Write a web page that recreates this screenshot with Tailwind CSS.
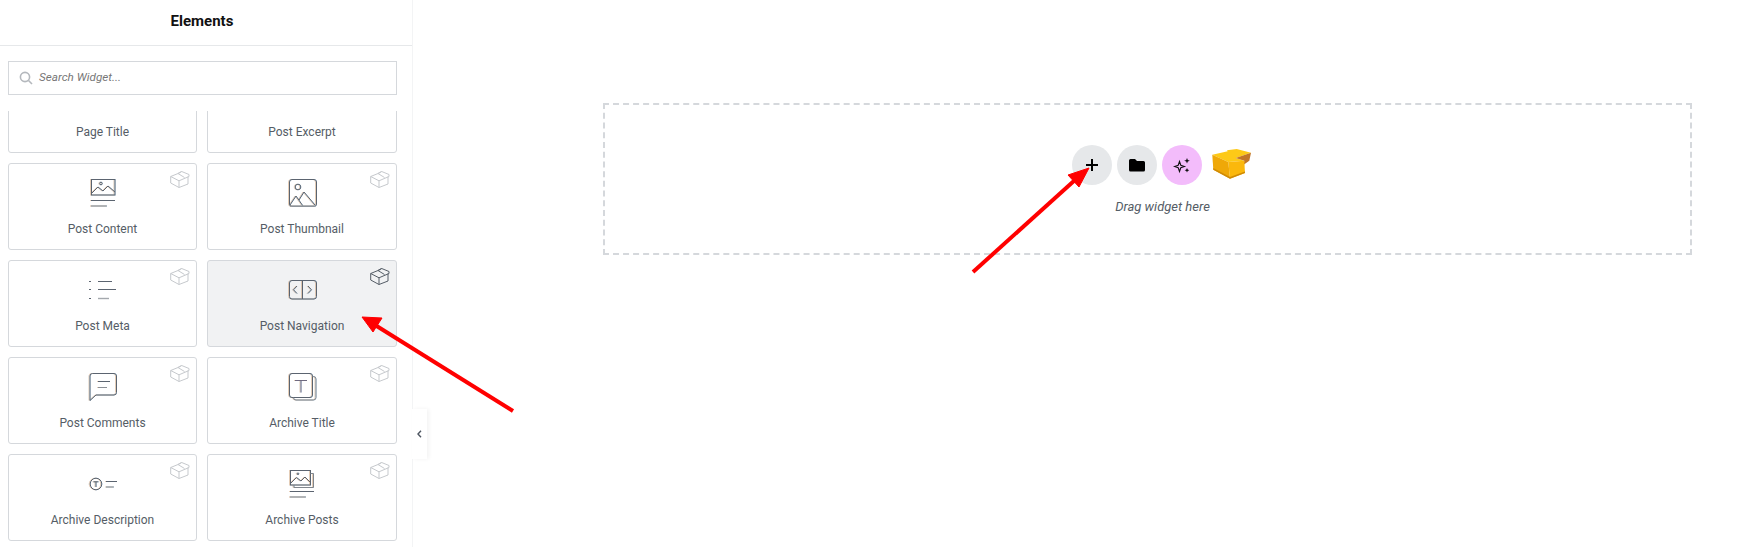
<!DOCTYPE html>
<html lang="en">
<head>
<meta charset="utf-8">
<title>Elements</title>
<script src="https://cdn.jsdelivr.net/npm/@tailwindcss/browser@4"></script>
</head>
<body class="bg-white overflow-hidden">
<div class="relative flex w-[1750px] h-[547px] overflow-hidden font-['Roboto',sans-serif] text-[#555d66]">

  <aside class="relative flex flex-col w-[413px] h-full shrink-0 bg-white border-r border-[#f3f4f5]">
    <header class="h-[46px] shrink-0 flex items-center justify-center border-b border-[#e6e8ea] pb-[2px] pr-[8px] text-[15px] font-bold text-[#111]">Elements</header>
    <div class="px-[8px] pt-[15px] pb-[16px] shrink-0">
      <div class="flex items-center h-[34px] w-[389px] border border-[#d5d8dc] pl-[10px] gap-[6px]">
        <svg class="w-[14px] h-[14px]" viewBox="0 0 14 14" fill="none" stroke="#b4b8bd" stroke-width="1.6"><circle cx="6" cy="6" r="4.6"/><path d="M9.5 9.5 13 13"/></svg>
        <span class="italic text-[11.700px] text-[#777]">Search Widget...</span>
      </div>
    </div>
    <div class="flex-1 overflow-hidden px-[8px]">
      <div class="grid grid-cols-[189px_190px] gap-x-[10px] gap-y-[10px] mt-[-45px]">

        <div class="relative h-[87px] rounded-[3px] border border-[#d5d8dc] flex flex-col items-center pt-[15px]">
          <div class="h-[30px]"></div><span class="mt-[12px] text-[12px] leading-[16px]">Page Title</span>
        </div>
        <div class="relative h-[87px] rounded-[3px] border border-[#d5d8dc] flex flex-col items-center pt-[15px]">
          <div class="h-[30px]"></div><span class="mt-[12px] text-[12px] leading-[16px]">Post Excerpt</span>
        </div>

        <div class="relative h-[87px] rounded-[3px] border border-[#d5d8dc] flex flex-col items-center pt-[15px]">
          <svg class="absolute top-[7px] right-[5px] w-[22px] h-[17px]" viewBox="0 0 22 17" fill="none" stroke="#c6c9cd" stroke-width="1"><path d="M1.700 5.500 10 9.800 20 5.500 M1.700 5.500V12L10 16.500 19 13V5.500 M10 9.800V16.500 M1.700 5.500 9 2.500 12.700 0.500 20 3.500V5.500 M9 2.500 15.500 6.500 M12.700 0.500 9 2.500"/></svg>
          <svg class="w-[30px] h-[30px] [filter:drop-shadow(-0.5px_0_0_rgba(230,150,80,0.4))_drop-shadow(0.5px_0_0_rgba(80,170,240,0.4))]" viewBox="0 0 30 30" fill="none" stroke="#5b6470"><rect x="3.500" y="0.500" width="23.500" height="15.500"/><path d="M4 14 10 8 15 12 20 7 27 13"/><circle cx="13" cy="4.500" r="1.300"/><path d="M3 21.500H27"/><path d="M3 27H19" stroke="#a4a8ad" stroke-width="1.400"/></svg>
          <span class="mt-[12px] text-[12px] leading-[16px]">Post Content</span>
        </div>
        <div class="relative h-[87px] rounded-[3px] border border-[#d5d8dc] flex flex-col items-center pt-[15px]">
          <svg class="absolute top-[7px] right-[5px] w-[22px] h-[17px]" viewBox="0 0 22 17" fill="none" stroke="#c6c9cd" stroke-width="1"><path d="M1.700 5.500 10 9.800 20 5.500 M1.700 5.500V12L10 16.500 19 13V5.500 M10 9.800V16.500 M1.700 5.500 9 2.500 12.700 0.500 20 3.500V5.500 M9 2.500 15.500 6.500 M12.700 0.500 9 2.500"/></svg>
          <svg class="w-[30px] h-[30px] [filter:drop-shadow(-0.5px_0_0_rgba(230,150,80,0.4))_drop-shadow(0.5px_0_0_rgba(80,170,240,0.4))]" viewBox="0 0 30 30" fill="none" stroke="#5b6470"><rect x="2.500" y="0.500" width="27" height="27" rx="2.500"/><circle cx="11" cy="8" r="2.800"/><path d="M3 26 9 17 16 27 M12 21 17 13 28 26"/><path d="M4 27H28" stroke="#a4a8ad" stroke-width="1.400"/></svg>
          <span class="mt-[12px] text-[12px] leading-[16px]">Post Thumbnail</span>
        </div>

        <div class="relative h-[87px] rounded-[3px] border border-[#d5d8dc] flex flex-col items-center pt-[15px]">
          <svg class="absolute top-[7px] right-[5px] w-[22px] h-[17px]" viewBox="0 0 22 17" fill="none" stroke="#c6c9cd" stroke-width="1"><path d="M1.700 5.500 10 9.800 20 5.500 M1.700 5.500V12L10 16.500 19 13V5.500 M10 9.800V16.500 M1.700 5.500 9 2.500 12.700 0.500 20 3.500V5.500 M9 2.500 15.500 6.500 M12.700 0.500 9 2.500"/></svg>
          <svg class="w-[30px] h-[30px]" viewBox="0 0 30 30" fill="none" stroke="#5b6470"><path d="M1 5.500H3 M1 13.500H3 M1 22.500H3 M10 5.500H24 M10 13.500H28"/><path d="M10 22.500H21" stroke="#a4a8ad" stroke-width="1.400"/></svg>
          <span class="mt-[12px] text-[12px] leading-[16px]">Post Meta</span>
        </div>
        <div class="relative h-[87px] rounded-[3px] border border-[#d5d8dc] bg-[#f1f2f3] flex flex-col items-center pt-[15px]">
          <svg class="absolute top-[7px] right-[5px] w-[22px] h-[17px]" viewBox="0 0 22 17" fill="none" stroke="#555d66" stroke-width="1"><path d="M1.700 5.500 10 9.800 20 5.500 M1.700 5.500V12L10 16.500 19 13V5.500 M10 9.800V16.500 M1.700 5.500 9 2.500 12.700 0.500 20 3.500V5.500 M9 2.500 15.500 6.500 M12.700 0.500 9 2.500"/></svg>
          <svg class="w-[30px] h-[30px] [filter:drop-shadow(-0.5px_0_0_rgba(230,150,80,0.4))_drop-shadow(0.5px_0_0_rgba(80,170,240,0.4))]" viewBox="0 0 30 30" fill="none" stroke="#5b6470"><rect x="2.500" y="4.500" width="27" height="18.500" rx="2.500"/><path d="M15.500 4.500V23 M10 10 6.500 13.800 10 17.500 M21 10 24.500 13.800 21 17.500"/></svg>
          <span class="mt-[12px] text-[12px] leading-[16px]">Post Navigation</span>
        </div>

        <div class="relative h-[87px] rounded-[3px] border border-[#d5d8dc] flex flex-col items-center pt-[15px]">
          <svg class="absolute top-[7px] right-[5px] w-[22px] h-[17px]" viewBox="0 0 22 17" fill="none" stroke="#c6c9cd" stroke-width="1"><path d="M1.700 5.500 10 9.800 20 5.500 M1.700 5.500V12L10 16.500 19 13V5.500 M10 9.800V16.500 M1.700 5.500 9 2.500 12.700 0.500 20 3.500V5.500 M9 2.500 15.500 6.500 M12.700 0.500 9 2.500"/></svg>
          <svg class="w-[30px] h-[30px] [filter:drop-shadow(-0.5px_0_0_rgba(230,150,80,0.4))_drop-shadow(0.5px_0_0_rgba(80,170,240,0.4))]" viewBox="0 0 30 30" fill="none" stroke="#5b6470"><path d="M4.500 0.500H26A2.500 2.500 0 0 1 28.500 3V19.500A2.500 2.500 0 0 1 26 22H8L2 27.500V3A2.500 2.500 0 0 1 4.500 0.500Z"/><path d="M10 8.500H22"/><path d="M10 14.500H19" stroke="#8a8f95"/></svg>
          <span class="mt-[12px] text-[12px] leading-[16px]">Post Comments</span>
        </div>
        <div class="relative h-[87px] rounded-[3px] border border-[#d5d8dc] flex flex-col items-center pt-[15px]">
          <svg class="absolute top-[7px] right-[5px] w-[22px] h-[17px]" viewBox="0 0 22 17" fill="none" stroke="#c6c9cd" stroke-width="1"><path d="M1.700 5.500 10 9.800 20 5.500 M1.700 5.500V12L10 16.500 19 13V5.500 M10 9.800V16.500 M1.700 5.500 9 2.500 12.700 0.500 20 3.500V5.500 M9 2.500 15.500 6.500 M12.700 0.500 9 2.500"/></svg>
          <svg class="w-[30px] h-[30px] [filter:drop-shadow(-0.5px_0_0_rgba(230,150,80,0.4))_drop-shadow(0.5px_0_0_rgba(80,170,240,0.4))]" viewBox="0 0 30 30" fill="none" stroke="#5b6470"><rect x="2.500" y="0.500" width="23" height="24" rx="2.500"/><path d="M25.500 3.500H26.500A2.500 2.500 0 0 1 29 6V24.500A2.500 2.500 0 0 1 26.500 27H9A2.500 2.500 0 0 1 6.500 24.500" stroke="#80868d"/><path d="M8 7.500H20 M14 7.500V19.500" stroke="#6f6a80"/></svg>
          <span class="mt-[12px] text-[12px] leading-[16px]">Archive Title</span>
        </div>

        <div class="relative h-[87px] rounded-[3px] border border-[#d5d8dc] flex flex-col items-center pt-[15px]">
          <svg class="absolute top-[7px] right-[5px] w-[22px] h-[17px]" viewBox="0 0 22 17" fill="none" stroke="#c6c9cd" stroke-width="1"><path d="M1.700 5.500 10 9.800 20 5.500 M1.700 5.500V12L10 16.500 19 13V5.500 M10 9.800V16.500 M1.700 5.500 9 2.500 12.700 0.500 20 3.500V5.500 M9 2.500 15.500 6.500 M12.700 0.500 9 2.500"/></svg>
          <svg class="w-[30px] h-[30px] [filter:drop-shadow(-0.5px_0_0_rgba(230,150,80,0.4))_drop-shadow(0.5px_0_0_rgba(80,170,240,0.4))]" viewBox="0 0 30 30" fill="none" stroke="#5b6470"><circle cx="8" cy="14" r="5.800"/><path d="M5.500 11.800H10.500 M8 11.800V17"/><path d="M18 11.500H29"/><path d="M18 17H26" stroke="#8a8f95"/></svg>
          <span class="mt-[12px] text-[12px] leading-[16px]">Archive Description</span>
        </div>
        <div class="relative h-[87px] rounded-[3px] border border-[#d5d8dc] flex flex-col items-center pt-[15px]">
          <svg class="absolute top-[7px] right-[5px] w-[22px] h-[17px]" viewBox="0 0 22 17" fill="none" stroke="#c6c9cd" stroke-width="1"><path d="M1.700 5.500 10 9.800 20 5.500 M1.700 5.500V12L10 16.500 19 13V5.500 M10 9.800V16.500 M1.700 5.500 9 2.500 12.700 0.500 20 3.500V5.500 M9 2.500 15.500 6.500 M12.700 0.500 9 2.500"/></svg>
          <svg class="w-[30px] h-[30px] [filter:drop-shadow(-0.5px_0_0_rgba(230,150,80,0.4))_drop-shadow(0.5px_0_0_rgba(80,170,240,0.4))]" viewBox="0 0 30 30" fill="none" stroke="#5b6470"><rect x="3.500" y="0.500" width="20" height="14.500"/><path d="M4 13 9.500 7.500 14 11 18 7 23 12"/><circle cx="11" cy="3.800" r="0.800"/><path d="M23.500 3.500H26.500V17.500H7V15" stroke="#80868d"/><path d="M3 21.500H27"/><path d="M3 27H19" stroke="#a4a8ad" stroke-width="1.400"/></svg>
          <span class="mt-[12px] text-[12px] leading-[16px]">Archive Posts</span>
        </div>

      </div>
    </div>
    <button class="absolute top-[409px] left-[412px] w-[15px] h-[50px] bg-white shadow-[2px_0_4px_rgba(0,0,0,0.05)] flex items-center justify-center">
      <svg class="w-[5px] h-[8px]" viewBox="0 0 5 8" fill="none" stroke="#4d5560" stroke-width="1.400"><path d="M4 0.800 1 4 4 7.200"/></svg>
    </button>
  </aside>

  <main class="flex-1 pt-[103px] pl-[190px] pr-[58px]">
    <div class="h-[152px] border-2 border-dashed border-[#d5d8dc] flex flex-col items-center pl-[30px] pt-[40px]">
      <div class="flex items-center gap-[5px]">
        <span class="w-[40px] h-[40px] rounded-full bg-[#e6e8ea] flex items-center justify-center">
          <svg class="w-[14px] h-[14px]" viewBox="0 0 14 14" fill="none" stroke="#000" stroke-width="2"><path d="M7 1V13 M1 7H13"/></svg>
        </span>
        <span class="w-[40px] h-[40px] rounded-full bg-[#e6e8ea] flex items-center justify-center">
          <svg class="w-[16px] h-[14px]" viewBox="0 0 16 14" fill="#000"><path d="M1.500 1H6L8 3H14.500A1.500 1.500 0 0 1 16 4.500V12A1.500 1.500 0 0 1 14.500 13.500H1.500A1.500 1.500 0 0 1 0 12V2.500A1.500 1.500 0 0 1 1.500 1Z"/></svg>
        </span>
        <span class="w-[40px] h-[40px] rounded-full bg-[#f3bcfb] flex items-center justify-center">
          <svg class="w-[18px] h-[18px]" viewBox="0 0 18 18"><path d="M6.500 5.500 7.800 9.200 11.500 10.500 7.800 11.800 6.500 15.500 5.200 11.800 1.500 10.500 5.200 9.200Z" fill="none" stroke="#111" stroke-width="1.100"/><path d="M14 2 14.800 4 16.800 4.800 14.800 5.600 14 7.600 13.200 5.600 11.200 4.800 13.200 4Z M14 12 14.700 13.600 16.300 14.300 14.700 15 14 16.600 13.300 15 11.700 14.300 13.300 13.600Z" fill="#111"/></svg>
        </span>
        <svg class="w-[41px] h-[40px] ml-[5px]" viewBox="0 0 41 40">
          <path d="M0.300 9.700 15.700 6.300 15 5.300 24.700 4 39 7.700 23.700 13 32.300 15.700 16.300 17Z" fill="#fdc917"/>
          <path d="M39 7.700 37.300 15.700 31.300 20 32.300 15.700 23.700 13Z" fill="#c27628"/>
          <path d="M16.300 17 32.300 15.700 33 28 18 33.700Z" fill="#fbb80c"/>
          <path d="M0.300 9.700 16.300 17 18 33.700 1.300 24.700Z" fill="#efa808"/>
          <path d="M1.300 24.700 18 33.700 33 28V26.500L18 32 1.200 23Z" fill="#cf8a06"/>
        </svg>
      </div>
      <p class="mt-[14px] text-[13px] leading-[16px] italic">Drag widget here</p>
    </div>
  </main>

  <svg class="absolute inset-0 w-[1750px] h-[547px] pointer-events-none" viewBox="0 0 1750 547" fill="#f00" stroke="none">
    <path d="M973 272 1075 180" stroke="#f00" stroke-width="4" fill="none"/>
    <path d="M1089 168 1068 175 1079 187Z" stroke="#f00" stroke-width="1"/>
    <path d="M513 411 375 325" stroke="#f00" stroke-width="4" fill="none"/>
    <path d="M362 317 382 318 373 332Z" stroke="#f00" stroke-width="1"/>
  </svg>
</div>
</body>
</html>
